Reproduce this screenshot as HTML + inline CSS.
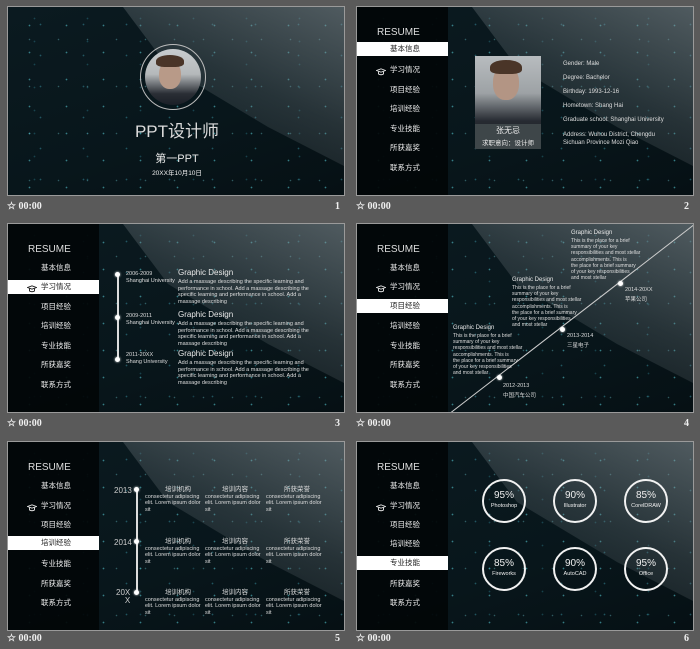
<!DOCTYPE html>
<html><head><meta charset="utf-8">
<style>
*{margin:0;padding:0;box-sizing:border-box}
body{width:700px;height:649px;background:#5a5a5a;position:relative;overflow:hidden;font-family:"Liberation Sans","Noto Sans CJK SC",sans-serif;color:#e8e8e8}
.s{position:absolute;width:338px;height:190px;border:1px solid #9a9a9a;overflow:hidden;
background:
radial-gradient(circle,rgba(90,210,220,.55) 0.6px,transparent 1.1px) 3px 5px/37px 27px,
radial-gradient(circle,rgba(70,180,200,.4) 0.6px,transparent 1.1px) 11px 2px/43px 31px,
radial-gradient(circle,rgba(120,220,230,.35) 0.5px,transparent 1px) 7px 9px/29px 47px,
radial-gradient(circle,rgba(60,170,190,.3) 0.6px,transparent 1.1px) 0 0/53px 23px,
linear-gradient(160deg,#0b1a20 0%,#08161b 60%,#061014 100%)}
.beam{position:absolute;left:0;top:0;width:338px;height:190px;
clip-path:polygon(115px 0,338px 0,338px 160px,260px 120px,160px 60px);
background:linear-gradient(205deg,rgba(150,158,162,.5) 0%,rgba(110,120,125,.3) 35%,rgba(60,70,75,0) 75%)}
.cap{position:absolute;width:338px;height:20px;font-family:"Liberation Serif",serif;font-weight:bold;font-size:10px;color:#f0f0f0;line-height:20px}
.cap .n{position:absolute;right:5px;top:0}
.side{position:absolute;left:0;top:0;width:91px;height:190px;background:rgba(2,6,8,.93)}
.side .r{position:absolute;left:20px;top:20px;font-size:10px;color:#ddd}
.side .i{position:absolute;left:0;width:91px;height:14px;line-height:14px;font-size:7.5px;padding-left:33px;color:#eee}
.side .i.on{background:#fff;color:#222}
.hat{position:absolute;left:-14px;top:3px;width:10px;height:8px}
.t{position:absolute;white-space:nowrap}
.sm{font-size:5.5px;line-height:6.5px;color:#ddd}
.circ{position:absolute;width:44px;height:44px;border:2px solid #f2f2f2;border-radius:50%;text-align:center;color:#eee}
.circ b{display:block;font-weight:normal;font-size:10px;margin-top:9px}
.circ i{display:block;font-style:normal;font-size:5.5px;margin-top:2px}
.dot{position:absolute;width:5px;height:5px;border-radius:50%;background:#fff;box-shadow:0 0 2px #fff}
</style></head><body>
<svg width="0" height="0" style="position:absolute"><defs><symbol id="h" viewBox="0 0 10 8"><path d="M0.5 2.5 L5 0.8 L9.5 2.5 L5 4.2 Z M2.5 3.3 V6 Q5 7.5 7.5 6 V3.3" fill="none" stroke="#eee" stroke-width="0.9"/></symbol></defs></svg>

<!-- Slide 1 -->
<div class="s" style="left:7px;top:6px">
<div class="beam"></div>
<div style="position:absolute;left:132px;top:37px;width:66px;height:66px;border:1.5px solid #bbb;border-radius:50%"></div>
<div style="position:absolute;left:137px;top:42px;width:56px;height:56px;border-radius:50%;overflow:hidden;background:linear-gradient(180deg,#c9cdcf 0%,#b5b9bb 45%,#2a2e35 80%,#1b1f27 100%)">
<div style="position:absolute;left:14px;top:12px;width:22px;height:28px;border-radius:45%;background:#b89a88"></div>
<div style="position:absolute;left:11px;top:6px;width:28px;height:12px;border-radius:50% 50% 30% 30%;background:#4a3528"></div>
</div>
<div class="t" style="left:0;width:338px;text-align:center;top:110px;font-size:17px;color:#dcdcdc">PPT设计师</div>
<div class="t" style="left:0;width:338px;text-align:center;top:143px;font-size:11px;color:#e8e8e8">第一PPT</div>
<div class="t" style="left:0;width:338px;text-align:center;top:160px;font-size:6.5px;color:#eee">20XX年10月10日</div>
</div>
<div class="cap" style="left:7px;top:197px">☆ 00:00<span class="n">1</span></div>

<!-- Slide 2 -->
<div class="s" style="left:356px;top:6px">
<div class="beam"></div>
<div class="side"><div class="r">RESUME</div>
<div class="i on" style="top:35px">基本信息</div>
<div class="i" style="top:56px"><span style="position:relative"><svg class="hat"><use href="#h"/></svg></span>学习情况</div>
<div class="i" style="top:76px">项目经验</div>
<div class="i" style="top:95px">培训经验</div>
<div class="i" style="top:115px">专业技能</div>
<div class="i" style="top:134px">所获嘉奖</div>
<div class="i" style="top:154px">联系方式</div>
</div>
<div style="position:absolute;left:118px;top:49px;width:66px;height:93px;background:linear-gradient(180deg,#b8bcbf 0%,#9da2a5 40%,#262a31 70%,#1e232a 100%);overflow:hidden">
<div style="position:absolute;left:18px;top:10px;width:26px;height:34px;border-radius:45%;background:#b39584"></div>
<div style="position:absolute;left:15px;top:4px;width:32px;height:14px;border-radius:50% 50% 30% 30%;background:#4a3528"></div>
<div style="position:absolute;left:0;top:68px;width:66px;height:25px;background:#3e4649"></div>
<div class="t" style="left:0;width:66px;text-align:center;top:69px;font-size:8px">张无忌</div>
<div class="t" style="left:0;width:66px;text-align:center;top:81px;font-size:6.5px">求职意向：设计师</div>
</div>
<div class="t sm" style="left:206px;top:54px;font-size:6px">Gender: Male</div>
<div class="t sm" style="left:206px;top:68px;font-size:6px">Degree: Bachelor</div>
<div class="t sm" style="left:206px;top:82px;font-size:6px">Birthday: 1993-12-16</div>
<div class="t sm" style="left:206px;top:96px;font-size:6px">Hometown: Shang Hai</div>
<div class="t sm" style="left:206px;top:110px;font-size:6px">Graduate school: Shanghai University</div>
<div class="t sm" style="left:206px;top:124px;font-size:6px;line-height:8px">Address: Wuhou District, Chengdu<br>Sichuan Province Mozi Qiao</div>
</div>
<div class="cap" style="left:356px;top:197px">☆ 00:00<span class="n">2</span></div>

<!-- Slide 3 -->
<div class="s" style="left:7px;top:223px">
<div class="beam"></div>
<div class="side"><div class="r">RESUME</div>
<div class="i" style="top:37px">基本信息</div>
<div class="i on" style="top:56px"><span style="position:relative"><svg class="hat"><use href="#h" style="filter:invert(1)"/></svg></span>学习情况</div>
<div class="i" style="top:76px">项目经验</div>
<div class="i" style="top:95px">培训经验</div>
<div class="i" style="top:115px">专业技能</div>
<div class="i" style="top:134px">所获嘉奖</div>
<div class="i" style="top:154px">联系方式</div>
</div>
<div style="position:absolute;left:109px;top:50px;width:1.5px;height:86px;background:#ddd"></div>
<div class="dot" style="left:107px;top:48px"></div>
<div class="dot" style="left:107px;top:91px"></div>
<div class="dot" style="left:107px;top:133px"></div>
<div class="t sm" style="left:118px;top:47px">2006-2009<br>Shanghai University</div>
<div class="t" style="left:170px;top:44px;font-size:8px">Graphic Design</div>
<div class="t sm" style="left:170px;top:55px">Add a massage describing the specific learning and<br>performance in school. Add a massage describing the<br>specific learning and performance in school. Add a<br>massage describing</div>
<div class="t sm" style="left:118px;top:89px">2009-2011<br>Shanghai University</div>
<div class="t" style="left:170px;top:86px;font-size:8px">Graphic Design</div>
<div class="t sm" style="left:170px;top:97px">Add a massage describing the specific learning and<br>performance in school. Add a massage describing the<br>specific learning and performance in school. Add a<br>massage describing</div>
<div class="t sm" style="left:118px;top:128px">2011-20XX<br>Shang University</div>
<div class="t" style="left:170px;top:125px;font-size:8px">Graphic Design</div>
<div class="t sm" style="left:170px;top:136px">Add a massage describing the specific learning and<br>performance in school. Add a massage describing the<br>specific learning and performance in school. Add a<br>massage describing</div>
</div>
<div class="cap" style="left:7px;top:414px">☆ 00:00<span class="n">3</span></div>

<!-- Slide 4 -->
<div class="s" style="left:356px;top:223px">
<div class="beam"></div>
<div class="side"><div class="r">RESUME</div>
<div class="i" style="top:37px">基本信息</div>
<div class="i" style="top:56px"><span style="position:relative"><svg class="hat"><use href="#h"/></svg></span>学习情况</div>
<div class="i on" style="top:75px">项目经验</div>
<div class="i" style="top:95px">培训经验</div>
<div class="i" style="top:115px">专业技能</div>
<div class="i" style="top:134px">所获嘉奖</div>
<div class="i" style="top:154px">联系方式</div>
</div>
<svg style="position:absolute;left:0;top:0" width="338" height="190"><line x1="92" y1="190" x2="338" y2="0" stroke="#ccc" stroke-width="1"/></svg>
<div class="dot" style="left:140px;top:151px"></div>
<div class="dot" style="left:203px;top:103px"></div>
<div class="dot" style="left:261px;top:57px"></div>
<div class="t" style="left:96px;top:101px;font-size:6px">Graphic Design</div>
<div class="t sm" style="left:96px;top:109px;font-size:5px;line-height:6.2px">This is the place for a brief<br>summary of your key<br>responsibilities and most stellar<br>accomplishments. This is<br>the place for a brief summary<br>of your key responsibilities<br>and most stellar</div>
<div class="t sm" style="left:146px;top:159px">2012-2013<br><span style="line-height:12px">中国汽车公司</span></div>
<div class="t" style="left:155px;top:53px;font-size:6px">Graphic Design</div>
<div class="t sm" style="left:155px;top:61px;font-size:5px;line-height:6.2px">This is the place for a brief<br>summary of your key<br>responsibilities and most stellar<br>accomplishments. This is<br>the place for a brief summary<br>of your key responsibilities<br>and most stellar</div>
<div class="t sm" style="left:210px;top:109px">2013-2014<br><span style="line-height:12px">三星电子</span></div>
<div class="t" style="left:214px;top:6px;font-size:6px">Graphic Design</div>
<div class="t sm" style="left:214px;top:14px;font-size:5px;line-height:6.2px">This is the place for a brief<br>summary of your key<br>responsibilities and most stellar<br>accomplishments. This is<br>the place for a brief summary<br>of your key responsibilities<br>and most stellar</div>
<div class="t sm" style="left:268px;top:63px">2014-20XX<br><span style="line-height:12px">苹果公司</span></div>
</div>
<div class="cap" style="left:356px;top:414px">☆ 00:00<span class="n">4</span></div>

<!-- Slide 5 -->
<div class="s" style="left:7px;top:441px">
<div class="beam"></div>
<div class="side"><div class="r">RESUME</div>
<div class="i" style="top:37px">基本信息</div>
<div class="i" style="top:57px"><span style="position:relative"><svg class="hat"><use href="#h"/></svg></span>学习情况</div>
<div class="i" style="top:76px">项目经验</div>
<div class="i on" style="top:94px">培训经验</div>
<div class="i" style="top:115px">专业技能</div>
<div class="i" style="top:135px">所获嘉奖</div>
<div class="i" style="top:154px">联系方式</div>
</div>
<div style="position:absolute;left:128px;top:48px;width:1.5px;height:104px;background:#ddd"></div>
<div class="dot" style="left:126px;top:45px"></div>
<div class="dot" style="left:126px;top:97px"></div>
<div class="dot" style="left:126px;top:148px"></div>
<div class="t" style="left:106px;top:44px;font-size:8px;color:#ccc">2013</div>
<div class="t" style="left:106px;top:96px;font-size:8px;color:#ccc">2014</div>
<div class="t" style="left:108px;top:147px;font-size:8px;color:#ccc;line-height:8px;text-align:right">20X<br>X</div>
<div class="t sm" style="left:137px;top:45px"><span style="font-size:6.5px;margin-left:20px">培训机构</span><br>consectetur adipiscing<br>elit. Lorem ipsum dolor<br>sit</div>
<div class="t sm" style="left:197px;top:45px"><span style="font-size:6.5px;margin-left:17px">培训内容</span><br>consectetur adipiscing<br>elit. Lorem ipsum dolor<br>sit</div>
<div class="t sm" style="left:258px;top:45px"><span style="font-size:6.5px;margin-left:18px">所获荣誉</span><br>consectetur adipiscing<br>elit. Lorem ipsum dolor<br>sit</div>
<div class="t sm" style="left:137px;top:97px"><span style="font-size:6.5px;margin-left:20px">培训机构</span><br>consectetur adipiscing<br>elit. Lorem ipsum dolor<br>sit</div>
<div class="t sm" style="left:197px;top:97px"><span style="font-size:6.5px;margin-left:17px">培训内容</span><br>consectetur adipiscing<br>elit. Lorem ipsum dolor<br>sit</div>
<div class="t sm" style="left:258px;top:97px"><span style="font-size:6.5px;margin-left:18px">所获荣誉</span><br>consectetur adipiscing<br>elit. Lorem ipsum dolor<br>sit</div>
<div class="t sm" style="left:137px;top:148px"><span style="font-size:6.5px;margin-left:20px">培训机构</span><br>consectetur adipiscing<br>elit. Lorem ipsum dolor<br>sit</div>
<div class="t sm" style="left:197px;top:148px"><span style="font-size:6.5px;margin-left:17px">培训内容</span><br>consectetur adipiscing<br>elit. Lorem ipsum dolor<br>sit</div>
<div class="t sm" style="left:258px;top:148px"><span style="font-size:6.5px;margin-left:18px">所获荣誉</span><br>consectetur adipiscing<br>elit. Lorem ipsum dolor<br>sit</div>
</div>
<div class="cap" style="left:7px;top:631px;height:18px;line-height:16px">☆ 00:00<span class="n">5</span></div>

<!-- Slide 6 -->
<div class="s" style="left:356px;top:441px">
<div class="beam"></div>
<div class="side"><div class="r">RESUME</div>
<div class="i" style="top:37px">基本信息</div>
<div class="i" style="top:57px"><span style="position:relative"><svg class="hat"><use href="#h"/></svg></span>学习情况</div>
<div class="i" style="top:76px">项目经验</div>
<div class="i" style="top:95px">培训经验</div>
<div class="i on" style="top:114px">专业技能</div>
<div class="i" style="top:135px">所获嘉奖</div>
<div class="i" style="top:154px">联系方式</div>
</div>
<div class="circ" style="left:125px;top:37px"><b>95%</b><i>Photoshop</i></div>
<div class="circ" style="left:196px;top:37px"><b>90%</b><i>Illustrator</i></div>
<div class="circ" style="left:267px;top:37px"><b>85%</b><i>CorelDRAW</i></div>
<div class="circ" style="left:125px;top:105px"><b>85%</b><i>Fireworks</i></div>
<div class="circ" style="left:196px;top:105px"><b>90%</b><i>AutoCAD</i></div>
<div class="circ" style="left:267px;top:105px"><b>95%</b><i>Office</i></div>
</div>
<div class="cap" style="left:356px;top:631px;height:18px;line-height:16px">☆ 00:00<span class="n">6</span></div>

</body></html>
